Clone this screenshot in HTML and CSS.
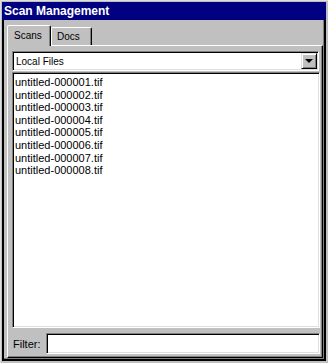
FILE: index.html
```html
<!doctype html>
<html lang="en">
  <head>
    <meta charset="UTF-8" />
    <title>Scan Management</title>
    <link rel="stylesheet" href="styles.css">
  </head>
  <body>
    <div class="window">
      <div class="title-bar">Scan Management</div>
      <div class="client">
        <div class="tabs">
          <div class="tab active">Scans</div>
          <div class="tab">Docs</div>
        </div>
        <div class="tab-panel">
          <div class="dropdown">
            <span class="dropdown-text">Local Files</span>
            <span class="dropdown-btn"><span class="arrow"></span></span>
          </div>
          <ul class="file-list">
            <li>untitled-000001.tif</li>
            <li>untitled-000002.tif</li>
            <li>untitled-000003.tif</li>
            <li>untitled-000004.tif</li>
            <li>untitled-000005.tif</li>
            <li>untitled-000006.tif</li>
            <li>untitled-000007.tif</li>
            <li>untitled-000008.tif</li>
          </ul>
          <div class="filter-row">
            <label class="filter-label">Filter:</label>
            <input class="filter-input" type="text" />
          </div>
        </div>
      </div>
    </div>
  </body>
</html>
```

FILE: styles.css
```css
body {
  margin: 0;
  background: #c0c0c0;
  font-family: "Liberation Sans", Arial, sans-serif;
}
.window {
  width: 328px;
  height: 363px;
  box-sizing: border-box;
  padding: 2px;
  background: #c0c0c0;
  box-shadow: inset 1px 1px 0 #dfdfdf;
  display: flex;
  flex-direction: column;
}
.title-bar {
  height: 18px;
  line-height: 18px;
  padding-left: 2px;
  background: #000080;
  color: white;
  font-weight: bold;
  font-size: 12px;
}
.client {
  flex: 1;
  display: flex;
  flex-direction: column;
  border: 2px solid #000;
  border-top: none;
  box-shadow: inset -1px -1px 0 #808080;
}
.tabs {
  display: flex;
  align-items: flex-end;
  height: 25px;
  padding-left: 3px;
}
.tab {
  box-sizing: border-box;
  width: 41px;
  height: 18px;
  padding: 3px 0 0 5px;
  font-size: 10px;
  line-height: 12px;
  color: #000;
  border-top: 1px solid #fff;
  border-left: 1px solid #fff;
  border-right: 1px solid #000;
  box-shadow: inset -1px 0 0 #808080;
  border-radius: 2px 2px 0 0;
}
.tab.active {
  width: 44px;
  height: 21px;
  margin-bottom: -1px;
  padding: 4px 0 0 6px;
  background: #c0c0c0;
  position: relative;
  z-index: 1;
}
.tab-panel {
  flex: 1;
  display: flex;
  flex-direction: column;
  margin: 0 1px 1px 3px;
  padding: 5px 2px 3px 4px;
  border: 1px solid #fff;
  border-right-color: #000;
  border-bottom-color: #000;
  box-shadow: inset -1px -1px 0 #808080;
}
.dropdown {
  display: flex;
  align-items: center;
  box-sizing: border-box;
  height: 20px;
  margin-right: 1px;
  background: #fff;
  border: 1px solid;
  border-color: #808080 #fff #fff #808080;
  box-shadow: inset 1px 1px 0 #000, inset -1px -1px 0 #dfdfdf;
}
.dropdown-text {
  flex: 1;
  padding-left: 3px;
  font-size: 10px;
}
.dropdown-btn {
  display: flex;
  align-items: center;
  justify-content: center;
  box-sizing: border-box;
  width: 16px;
  height: 16px;
  margin-right: 1px;
  background: #c0c0c0;
  border: 1px solid;
  border-color: #dfdfdf #000 #000 #dfdfdf;
  box-shadow: inset 1px 1px 0 #fff, inset -1px -1px 0 #808080;
}
.arrow {
  width: 0;
  height: 0;
  border-left: 4px solid transparent;
  border-right: 4px solid transparent;
  border-top: 4px solid #000;
}
.file-list {
  flex: 1;
  margin: 1px 0 0;
  padding: 3px 2px;
  list-style: none;
  background: #fff;
  border: 1px solid;
  border-color: #808080 #fff #fff #808080;
  box-shadow: inset 1px 1px 0 #000, inset -1px -1px 0 #dfdfdf;
  font-size: 11px;
  line-height: 12.6px;
}
.filter-row {
  display: flex;
  align-items: center;
  margin-top: 5px;
}
.filter-label {
  width: 33px;
  padding-left: 1px;
  font-size: 11px;
}
.filter-input {
  flex: 1;
  box-sizing: border-box;
  height: 21px;
  margin: 0;
  padding: 0 3px;
  border: 1px solid;
  border-color: #808080 #fff #fff #808080;
  box-shadow: inset 1px 1px 0 #000, inset -1px -1px 0 #dfdfdf;
  outline: none;
}
```
